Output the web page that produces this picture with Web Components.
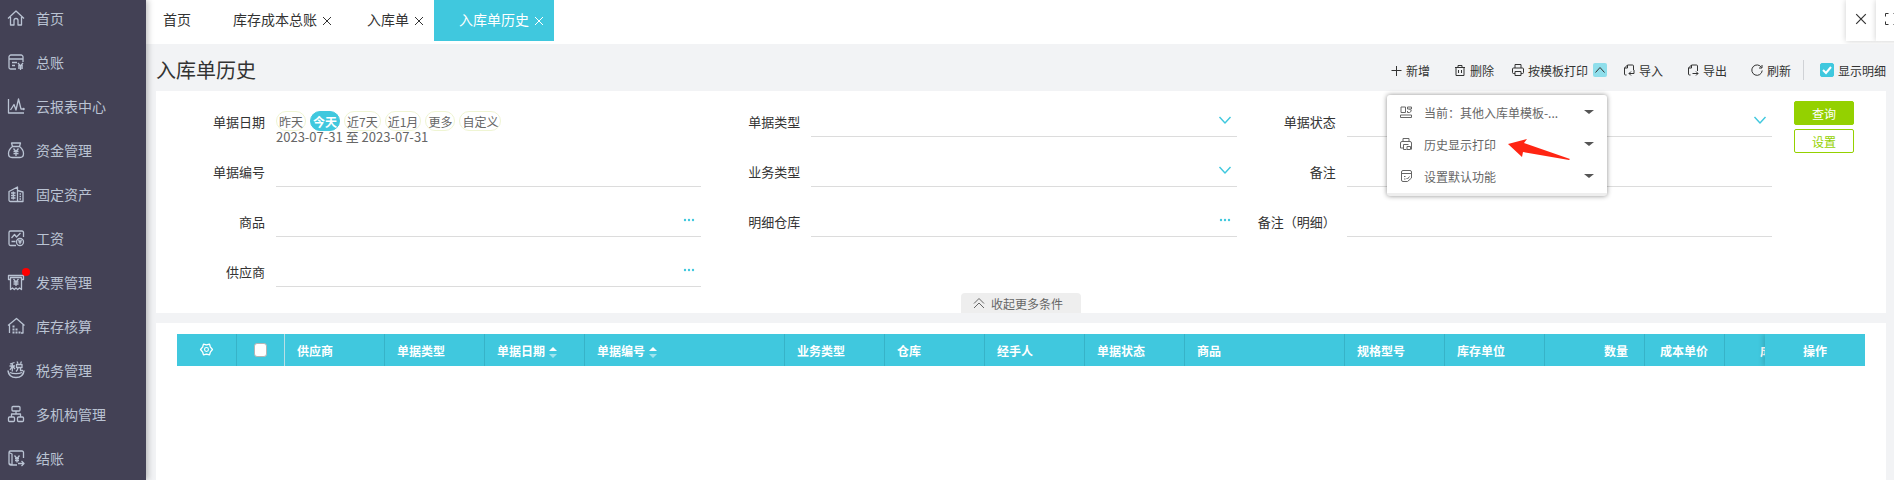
<!DOCTYPE html>
<html lang="zh-CN">
<head>
<meta charset="UTF-8">
<meta name="viewport" content="width=device-width, initial-scale=1">
<title>入库单历史</title>
<style>
  :root {
    --primary: #40c8de;
    --green: #94d100;
    --page: #f2f3f5;
    --text: #333;
    --muted: #666;
    --line: #dcdcdc;
  }
  body {
    margin: 0;
    background: var(--page);
    color: var(--text);
    font-family: "Noto Sans CJK SC", "Liberation Sans", sans-serif;
    font-size: 12px;
  }
</style>
</head>
<body>
<app-shell>
  <side-nav slot="nav">
    <nav-item icon="home">首页</nav-item>
    <nav-item icon="ledger">总账</nav-item>
    <nav-item icon="chart">云报表中心</nav-item>
    <nav-item icon="money">资金管理</nav-item>
    <nav-item icon="building">固定资产</nav-item>
    <nav-item icon="salary">工资</nav-item>
    <nav-item icon="invoice" dot>发票管理</nav-item>
    <nav-item icon="store">库存核算</nav-item>
    <nav-item icon="tax">税务管理</nav-item>
    <nav-item icon="org">多机构管理</nav-item>
    <nav-item icon="closing">结账</nav-item>
  </side-nav>

  <tab-bar slot="tabs">
    <tab-item fixed>首页</tab-item>
    <tab-item>库存成本总账</tab-item>
    <tab-item>入库单</tab-item>
    <tab-item active>入库单历史</tab-item>
  </tab-bar>

  <page-header>
    <span slot="title">入库单历史</span>
    <tool-button icon="plus">新增</tool-button>
    <tool-button icon="trash">删除</tool-button>
    <print-menu></print-menu>
    <tool-button icon="import">导入</tool-button>
    <tool-button icon="export">导出</tool-button>
    <tool-button icon="refresh">刷新</tool-button>
  </page-header>

  <filter-panel>
    <date-field label="单据日期" from="2023-07-31" to="2023-07-31"></date-field>
    <form-field label="单据类型" type="select"></form-field>
    <form-field label="单据状态" type="select"></form-field>
    <form-field label="单据编号"></form-field>
    <form-field label="业务类型" type="select"></form-field>
    <form-field label="备注"></form-field>
    <form-field label="商品" type="lookup"></form-field>
    <form-field label="明细仓库" type="lookup"></form-field>
    <form-field label="备注（明细）"></form-field>
    <form-field label="供应商" type="lookup"></form-field>
  </filter-panel>

  <data-grid></data-grid>
</app-shell>

<script>
// Icon paths, keyed by name: [viewBox size, markup]
const ICONS = {
  home: [18, '<path d="M1 9.500 9 2l8 7.500M3.500 8v8H7v-4.500a2 2 0 0 1 4 0V16h3.500V8"/>'],
  ledger: [18, '<path d="M16 9V4a2 2 0 0 0-2-2H4a2 2 0 0 0-2 2v10.500A1.500 1.500 0 0 0 3.500 16H9M2 6h14M5 9.500h5M5 12.500h3M11 10l2.500 3L16 10M13.500 13v4M11 13h5M11 15h5"/>'],
  chart: [18, '<path d="M1.500 2v14H17M3.500 13 7 7.500l2 5.500 2.500-11 2.500 10h1.500"/><circle cx="16.500" cy="12" r=".6"/>'],
  money: [18, '<path d="M5.500 5.500C3 7.500 1.500 10 1.500 12.500 1.500 15 3 16.500 5 16.500h8c2 0 3.500-1.500 3.500-4 0-2.500-1.500-5-4-7zM5.500 5.500 4.500 2h9l-1 3.500M6.500 7.500 9 10.500l2.500-3M9 10.500V15M6.500 10.500h5M6.500 12.700h5"/>'],
  building: [18, '<path d="M4.500 16.500h-1A1.500 1.500 0 0 1 2 15V6.500L10.500 2v14.500H4.500M10.500 5.500 16 7v9.500h-5.500M4 8h4.500M4 10.500h4.500M4 13h4.500M12.500 9H14M12.500 11.500H14M12.500 14H14M6.300 6.500v8"/>'],
  salary: [18, '<path d="M16.500 8V3.500A1.500 1.500 0 0 0 15 2H3.500A1.500 1.500 0 0 0 2 3.500V15a1.500 1.500 0 0 0 1.500 1.500H9M4.500 9 7.500 5.500l2 2.500 4-4M4.500 12.500h4"/><circle cx="13" cy="13" r="3.500"/><path d="m11.500 11 1.500 2 1.500-2M13 13v2M11.500 13h3"/>'],
  invoice: [18, '<path d="M3.500 6.500H1.500v-4h15v4h-2M3.500 4.500V16.500L5.500 15l1.800 1.500L9 15l1.700 1.500L12.500 15l2 1.500v-12zM6.500 6 9 9l2.500-3M9 9v4M6.500 9h5M6.500 11h5"/>'],
  store: [18, '<path d="M1 8.500 9.500 1.500l8 7M2.500 7.500v8.500M16 7.500V16h-2"/><path stroke-width="1.800" stroke-dasharray="2 1" d="M5.500 15.500h8M5.500 12.500h5M5.500 9.500h2"/>'],
  tax: [18, '<path stroke-width="1.600" d="M1 9.500c.5 4.500 3.500 7 8 7s7.500-2.500 8-7"/><path d="M3 11.500c3 1.500 9 1.500 12 0M3 3 7.500 1.500M5.300 2v8.500M2.500 5H8M3 9l2.300-4L8 8M10 .500l1 2M14.500.500l-1 2M9.500 3.500h5.500v3H9.500zM11 6.500c0 2-1 3-2 4M13.500 6.500v3H16"/>'],
  org: [18, '<rect x="5" y="1.500" width="8" height="4.500" rx="1"/><rect x="1.500" y="12" width="6" height="4.500" rx="1"/><rect x="10.500" y="12" width="6" height="4.500" rx="1"/><path d="M9 6v3M4.500 12V9h9v3"/>'],
  closing: [18, '<path d="M16.500 9V3.500A1.500 1.500 0 0 0 15 2H3.500A1.500 1.500 0 0 0 2 3.500V14a2 2 0 0 0 2 2h6M2 3.500l3 1.500v11L2 14.500M7.500 6.500l2.500 3 2.500-3M10 9.500v4M8 9.500h4M8 11.500h4M11 14.500h6M14.500 12l2.500 2.500-2.500 2.500"/>'],

  plus: [12, '<path d="M6.500 2v10M1.500 6.500h10"/>'],
  trash: [12, '<path d="M1 3.500h10M4 3.500v-2h4v2M2 3.500v8h8v-8M4.500 6v3M7.500 6v3"/>'],
  printer: [12, '<path d="M3 4V.500h6V4M3 9.500H1.500A1 1 0 0 1 .500 8.500V5a1 1 0 0 1 1-1h9a1 1 0 0 1 1 1v3.500a1 1 0 0 1-1 1H9M3 7.500h6v4H3z"/>'],
  import: [12, '<path d="M3.500 11H2.500a1 1 0 0 1-1-1V4l3-3h5a1 1 0 0 1 1 1v4M4.500 1v3h-3M11 6v3.500H6M8 7.500l-2 2 2 2"/>'],
  export: [12, '<path d="M3.500 11H2.500a1 1 0 0 1-1-1V4l3-3h5a1 1 0 0 1 1 1v5M4.500 1v3h-3M5.500 9.500H11M9 7.500l2 2-2 2"/>'],
  refresh: [12, '<path d="M10.500 3.500a5.200 5.200 0 1 0 .700 3M11 1v3H8"/>'],

  template: [12, '<path d="M1 1h4.500v5.500H1zM7.500 1h4v2h-4zM9.500 3l2 2-2 1.500h-2V5M.500 9h11v2.500H.500z"/>'],
  history: [12, '<path d="M3 3.500v-3h6v3M3 10H.500V5A1.500 1.500 0 0 1 2 3.500h8A1.500 1.500 0 0 1 11.500 5v6.500M8.500 6.500H3.500v5h3"/><path d="M7 8.500h3.500v3H7z"/>'],
  form: [12, '<path d="M7.500 11.500H3A1.500 1.500 0 0 1 1.500 10V2A1.500 1.500 0 0 1 3 .500h7A1.500 1.500 0 0 1 11.500 2v6zM1.500 3.500h10M4 6.500h1.500M4 9h1.500M6.500 8l1 1L9.500 6.500"/>'],

  close: [10, '<path d="m1 1 8 8M9 1 1 9"/>'],
  full: [12, '<path d="M.500 3.500v-3h3M8.500.500h3v3M11.500 8.500v3h-3M3.500 11.500h-3v-3"/>'],
  down: [12, '<path stroke-width="1.400" d="m.500 3 5.500 6 5.500-6"/>'],
  up: [12, '<path d="m1.500 8.500 4.500-5 4.500 5"/>'],
  collapse: [12, '<path d="M1 6.500 6 1.500l5 5M1 11l5-5 5 5"/>'],
  dots: [12, '<g fill="currentColor" stroke="none"><circle cx="2" cy="6" r="1.200"/><circle cx="6" cy="6" r="1.200"/><circle cx="10" cy="6" r="1.200"/></g>'],
  gear: [12, '<path stroke-width="1.200" d="M3.200 1 6 1.800 8.800 1l.7 2.500L11.500 6l-2 2.500-.7 2.500L6 10.200 3.200 11l-.7-2.500L.500 6l2-2.500z"/><circle cx="6" cy="6" r="1.800"/>'],
};

function icon(name, size) {
  const [box, body] = ICONS[name];
  const px = size || box;
  return `<svg width="${px}" height="${px}" viewBox="0 0 ${box} ${box}" fill="none" stroke="currentColor" stroke-linejoin="round" aria-hidden="true">${body}</svg>`;
}

// Shared reset for every shadow root
const BASE = `
  *, *::before, *::after { box-sizing: border-box; }
  svg { display: block; flex: none; overflow: visible; }
  button, input, select { font: inherit; color: inherit; margin: 0; }
  button { background: none; border: 0; padding: 0; cursor: pointer; white-space: nowrap; }
  [hidden] { display: none; }
`;

class BaseElement extends HTMLElement {
  connectedCallback() {
    if (this.shadowRoot) return;
    this.attachShadow({ mode: 'open' });
    this.shadowRoot.innerHTML = `<style>${BASE}${this.styles()}</style>${this.render()}`;
    this.addListeners();
  }
  styles() { return ''; }
  render() { return '<slot></slot>'; }
  addListeners() {}
}

class AppShell extends BaseElement {
  styles() {
    return `
      :host { display: flex; height: 100vh; overflow: hidden; }
      .main { flex: 1; min-width: 0; display: flex; flex-direction: column; }
      .content { flex: 1; min-height: 0; display: flex; flex-direction: column; padding: 0 8px 0 10px; }
    `;
  }
  render() {
    return `
      <slot name="nav"></slot>
      <div class="main">
        <slot name="tabs"></slot>
        <main class="content"><slot></slot></main>
      </div>
    `;
  }
}
customElements.define('app-shell', AppShell);

class SideNav extends BaseElement {
  styles() {
    return `
      :host {
        display: block;
        flex: none;
        width: 146px;
        overflow: hidden auto;
        scrollbar-width: none;
        background: #434155;
        box-shadow: 2px 0 6px rgba(0, 0, 0, 0.25);
        z-index: 1;
      }
      nav { margin-top: -4px; }
    `;
  }
  render() { return '<nav aria-label="主菜单"><slot></slot></nav>'; }
}
customElements.define('side-nav', SideNav);

class NavItem extends BaseElement {
  styles() {
    return `
      :host { display: block; }
      a {
        display: flex;
        align-items: center;
        gap: 11px;
        height: 44px;
        padding-left: 7px;
        color: #bac3d3;
        font-size: 14px;
        text-decoration: none;
        white-space: nowrap;
      }
      .icon { position: relative; }
      .icon svg { stroke-width: 1.3; }
      .dot {
        position: absolute;
        top: -5px;
        right: -5px;
        width: 8px;
        height: 8px;
        border-radius: 50%;
        background: #f00;
      }
    `;
  }
  render() {
    const dot = this.hasAttribute('dot') ? '<span class="dot"></span>' : '';
    return `<a href="#"><span class="icon">${icon(this.getAttribute('icon'))}${dot}</span><slot></slot></a>`;
  }
}
customElements.define('nav-item', NavItem);

class TabBar extends BaseElement {
  styles() {
    return `
      :host { display: flex; flex: none; height: 44px; background: #fff; overflow: hidden; }
      .tabs { flex: 1; min-width: 0; display: flex; overflow: hidden; height: 41px; }
      .actions { display: flex; flex: none; height: 41px; margin-right: -12px; }
      .actions button {
        display: flex;
        align-items: center;
        justify-content: center;
        width: 30px;
        padding-bottom: 3px;
        background: #fff;
        box-shadow: 0 0 6px rgba(0, 0, 0, 0.2);
      }
    `;
  }
  render() {
    return `
      <div class="tabs"><slot></slot></div>
      <div class="actions">
        <button aria-label="关闭全部">${icon('close', 12)}</button>
        <button aria-label="全屏">${icon('full')}</button>
      </div>
    `;
  }
}
customElements.define('tab-bar', TabBar);

class TabItem extends BaseElement {
  styles() {
    return `
      :host {
        display: flex;
        align-items: center;
        flex: none;
        gap: 5px;
        padding: 0 10px 0 25px;
        font-size: 14px;
      }
      :host([fixed]) { padding: 0 17px; }
      :host([active]) { background: var(--primary); color: #fff; }
      .name { padding-bottom: 3px; }
    `;
  }
  render() {
    const close = this.hasAttribute('fixed') ? '' : `<button class="close" aria-label="关闭">${icon('close')}</button>`;
    return `<button class="name"><slot></slot></button>${close}`;
  }
  addListeners() {
    this.shadowRoot.querySelector('.name').addEventListener('click', () => {
      this.parentElement.querySelectorAll('tab-item').forEach(t => t.removeAttribute('active'));
      this.setAttribute('active', '');
    });
    const close = this.shadowRoot.querySelector('.close');
    if (close) close.addEventListener('click', () => this.remove());
  }
}
customElements.define('tab-item', TabItem);

class PageHeader extends BaseElement {
  styles() {
    return `
      :host {
        display: flex;
        flex: none;
        align-items: center;
        justify-content: space-between;
        padding: 16px 0 11px;
      }
      h1 { margin: 0; font-size: 20px; line-height: 20px; font-weight: 400; white-space: nowrap; }
      .tools { display: flex; align-items: center; height: 20px; }
      .divider { width: 1px; height: 20px; margin-right: 16px; background: #d0d2d6; }
      label { display: flex; align-items: center; gap: 4px; white-space: nowrap; }
      input {
        appearance: none;
        width: 14px;
        height: 14px;
        border: 1px solid var(--primary);
        border-radius: 2px;
        background: #fff;
      }
      input:checked { background: var(--primary); }
      .check { display: grid; }
      .check > * { grid-area: 1 / 1; }
      .check svg { pointer-events: none; color: #fff; stroke-width: 2; }
    `;
  }
  render() {
    return `
      <h1><slot name="title"></slot></h1>
      <div class="tools">
        <slot></slot>
        <span class="divider"></span>
        <label>
          <span class="check">
            <input type="checkbox" checked>
            <svg width="14" height="14" viewBox="0 0 14 14" fill="none" stroke="currentColor"><path d="m3 7 3 3 5-6"/></svg>
          </span>
          显示明细
        </label>
      </div>
    `;
  }
}
customElements.define('page-header', PageHeader);

class ToolButton extends BaseElement {
  styles() {
    return `
      :host { display: block; padding: 0 12px; }
      button { display: flex; align-items: center; gap: 4px; height: 20px; }
    `;
  }
  render() { return `<button>${icon(this.getAttribute('icon'))}<slot></slot></button>`; }
}
customElements.define('tool-button', ToolButton);

class PrintMenu extends BaseElement {
  styles() {
    return `
      :host { display: block; padding: 0 4px 0 6px; }
      .group { position: relative; display: flex; align-items: center; gap: 5px; }
      .print { display: flex; align-items: center; gap: 4px; height: 20px; }
      .toggle {
        display: flex;
        align-items: center;
        justify-content: center;
        width: 14px;
        height: 14px;
        border-radius: 2px;
        background: #8fdeeb;
      }
      .menu {
        position: absolute;
        top: calc(100% + 15px);
        right: 0;
        width: 220px;
        padding: 1px 0;
        border-bottom: 3px solid #eee;
        border-radius: 3px;
        background: #fff;
        box-shadow: 0 0 5px rgba(0, 0, 0, 0.45);
        color: var(--muted);
        z-index: 2;
      }
      .menu button {
        display: flex;
        align-items: center;
        width: 100%;
        height: 32px;
        padding: 0 13px;
      }
      .menu button:hover { background: #f5f7fa; }
      .menu span { flex: 1; margin-left: 12px; text-align: left; }
      .caret { border: 5px solid transparent; border-top: 4px solid #555; border-bottom: 0; }
      .pointer { position: absolute; left: 121px; top: 43px; pointer-events: none; }
    `;
  }
  render() {
    const items = [['template', '当前：其他入库单模板-...'], ['history', '历史显示打印'], ['form', '设置默认功能']];
    return `
      <div class="group">
        <button class="print">${icon('printer')}按模板打印</button>
        <button class="toggle" aria-label="打印选项" aria-expanded="true">${icon('up')}</button>
        <div class="menu">
          ${items.map(([name, text]) => `<button>${icon(name)}<span>${text}</span><i class="caret"></i></button>`).join('')}
          <svg class="pointer" width="63" height="23" viewBox="0 0 63 23" aria-hidden="true">
            <path fill="#ff2513" d="M0 6 19 1l-3 4 46 16-1 1-46-8-1 5z"/>
          </svg>
        </div>
      </div>
    `;
  }
  addListeners() {
    const toggle = this.shadowRoot.querySelector('.toggle');
    const menu = this.shadowRoot.querySelector('.menu');
    toggle.addEventListener('click', () => {
      menu.hidden = !menu.hidden;
      toggle.setAttribute('aria-expanded', String(!menu.hidden));
    });
  }
}
customElements.define('print-menu', PrintMenu);

const FIELD = `
  :host { display: grid; grid-template-columns: 99px minmax(0, 1fr); column-gap: 11px; height: 30px; }
  .label { font-size: 13px; line-height: 30px; text-align: right; white-space: nowrap; }
`;

class FormField extends BaseElement {
  styles() {
    return FIELD + `
      .box { position: relative; display: flex; border-bottom: 1px solid var(--line); }
      .box:focus-within { border-color: var(--primary); }
      input, select {
        flex: 1;
        min-width: 0;
        border: 0;
        outline: 0;
        padding: 0 24px 0 0;
        background: none;
        appearance: none;
      }
      .mark {
        position: absolute;
        right: 6px;
        top: 7px;
        color: var(--primary);
      }
      svg.mark { pointer-events: none; }
    `;
  }
  render() {
    const type = this.getAttribute('type');
    let control = '<input id="control" type="text">';
    if (type === 'select') {
      control = `<select id="control"><option></option></select>${icon('down').replace('<svg', '<svg class="mark"')}`;
    } else if (type === 'lookup') {
      control += `<button class="mark" aria-label="选择">${icon('dots')}</button>`;
    }
    return `<label class="label" for="control">${this.getAttribute('label')}</label><div class="box">${control}</div>`;
  }
}
customElements.define('form-field', FormField);

class DateField extends BaseElement {
  styles() {
    return FIELD + `
      .chips { display: flex; gap: 4px; padding-top: 4px; }
      .chips button {
        height: 20px;
        padding: 1px 2px 0;
        border: 1px solid #eff5d3;
        border-radius: 10px;
        color: var(--muted);
        line-height: 18px;
      }
      .chips button.selected {
        border-color: var(--primary);
        background: var(--primary);
        color: #fff;
        font-weight: 700;
      }
      .range { font-size: 13px; line-height: 12px; color: var(--muted); white-space: nowrap; }
    `;
  }
  render() {
    const chips = ['昨天', '今天', '近7天', '近1月', '更多', '自定义'];
    return `
      <span class="label" id="name">${this.getAttribute('label')}</span>
      <div role="group" aria-labelledby="name">
        <div class="chips">${chips.map(c => `<button class="${c === '今天' ? 'selected' : ''}">${c}</button>`).join('')}</div>
        <div class="range">${this.getAttribute('from')} 至 ${this.getAttribute('to')}</div>
      </div>
    `;
  }
  addListeners() {
    const chips = this.shadowRoot.querySelectorAll('.chips button');
    chips.forEach(btn => {
      btn.addEventListener('click', () => {
        chips.forEach(b => b.classList.remove('selected'));
        btn.classList.add('selected');
      });
    });
  }
}
customElements.define('date-field', DateField);

class FilterPanel extends BaseElement {
  styles() {
    return `
      :host { display: flex; flex: none; flex-direction: column; background: #fff; margin-bottom: 10px; }
      .row { display: flex; }
      .fields {
        flex: 1;
        min-width: 0;
        display: grid;
        grid-template-columns: repeat(3, minmax(0, 1fr));
        row-gap: 20px;
        padding: 16px 0 0 10px;
      }
      .actions { display: flex; flex-direction: column; gap: 4px; padding: 10px 32px 0 22px; }
      .actions button {
        width: 60px;
        height: 24px;
        padding-top: 1px;
        border: 1px solid var(--green);
        border-radius: 2px;
        color: var(--green);
      }
      .actions .primary { background: var(--green); color: #fff; }
      .more {
        display: flex;
        align-items: center;
        align-self: center;
        justify-content: center;
        gap: 6px;
        width: 120px;
        height: 20px;
        margin-top: 6px;
        padding-right: 6px;
        border-radius: 4px 4px 0 0;
        background: #eee;
        color: var(--muted);
      }
    `;
  }
  render() {
    return `
      <div class="row">
        <div class="fields"><slot></slot></div>
        <div class="actions">
          <button class="primary">查询</button>
          <button>设置</button>
        </div>
      </div>
      <button class="more">${icon('collapse')}收起更多条件</button>
    `;
  }
}
customElements.define('filter-panel', FilterPanel);

const COLUMNS = [
  { text: '供应商', width: 100 },
  { text: '单据类型', width: 100 },
  { text: '单据日期', width: 100, sort: true },
  { text: '单据编号', width: 200, sort: true },
  { text: '业务类型', width: 100 },
  { text: '仓库', width: 100 },
  { text: '经手人', width: 100 },
  { text: '单据状态', width: 100 },
  { text: '商品', width: 160 },
  { text: '规格型号', width: 100 },
  { text: '库存单位', width: 100 },
  { text: '数量', width: 100, num: true },
  { text: '成本单价', width: 80, num: true },
  { text: '成本金额', width: 100, num: true },
];

class DataGrid extends BaseElement {
  styles() {
    return `
      :host { display: block; flex: 1; min-height: 0; padding: 11px 21px; background: #fff; }
      .grid { display: flex; }
      .scroll { flex: 1; min-width: 0; overflow: auto hidden; scrollbar-width: none; }
      .fixed { flex: none; width: 100px; box-shadow: -2px 0 5px rgba(0, 0, 0, 0.15); clip-path: inset(0 0 0 -8px); }
      table { table-layout: fixed; width: 100%; border-collapse: separate; border-spacing: 0; }
      .scroll table { width: 1648px; min-width: 100%; }
      th {
        height: 32px;
        padding: 0 12px;
        border-right: 1px solid #37b3c8;
        background: var(--primary);
        color: #fff;
        font-weight: 700;
        text-align: left;
        white-space: nowrap;
      }
      th.tool { padding: 0; text-align: center; }
      th.tool svg, th.tool input { display: block; margin: 0 auto; }
      th.tool input {
        appearance: none;
        width: 13px;
        height: 14px;
        border: 1px solid #b5b5b5;
        border-radius: 3px;
        background: #fff;
      }
      th.tool input:checked { background: var(--green); }
      th.select { border-right-color: #b9dfe6; }
      th.num { padding-right: 16px; text-align: right; }
      th.last { border-right: 0; text-align: center; }
      .sort { display: inline-flex; flex-direction: column; gap: 3px; margin-left: 4px; vertical-align: middle; }
      .sort i { border: 4px solid transparent; }
      .sort .asc { border-top: 0; border-bottom-color: #fff; }
      .sort .desc { border-bottom: 0; border-top-color: #9fe3ee; }
    `;
  }
  render() {
    const sort = '<span class="sort"><i class="asc"></i><i class="desc"></i></span>';
    // The action column stays in place while the others scroll
    return `
      <div class="grid">
        <div class="scroll">
          <table>
            <colgroup>
              <col style="width: 60px"><col style="width: 48px">
              ${COLUMNS.map(c => `<col style="width: ${c.width}px">`).join('')}
            </colgroup>
            <thead>
              <tr>
                <th class="tool"><button aria-label="列设置">${icon('gear', 13)}</button></th>
                <th class="tool select"><input type="checkbox" aria-label="全选"></th>
                ${COLUMNS.map(c => `<th class="${c.num ? 'num' : ''}">${c.text}${c.sort ? sort : ''}</th>`).join('')}
              </tr>
            </thead>
            <tbody></tbody>
          </table>
        </div>
        <div class="fixed">
          <table>
            <thead><tr><th class="last">操作</th></tr></thead>
            <tbody></tbody>
          </table>
        </div>
      </div>
    `;
  }
}
customElements.define('data-grid', DataGrid);
</script>
</body>
</html>
